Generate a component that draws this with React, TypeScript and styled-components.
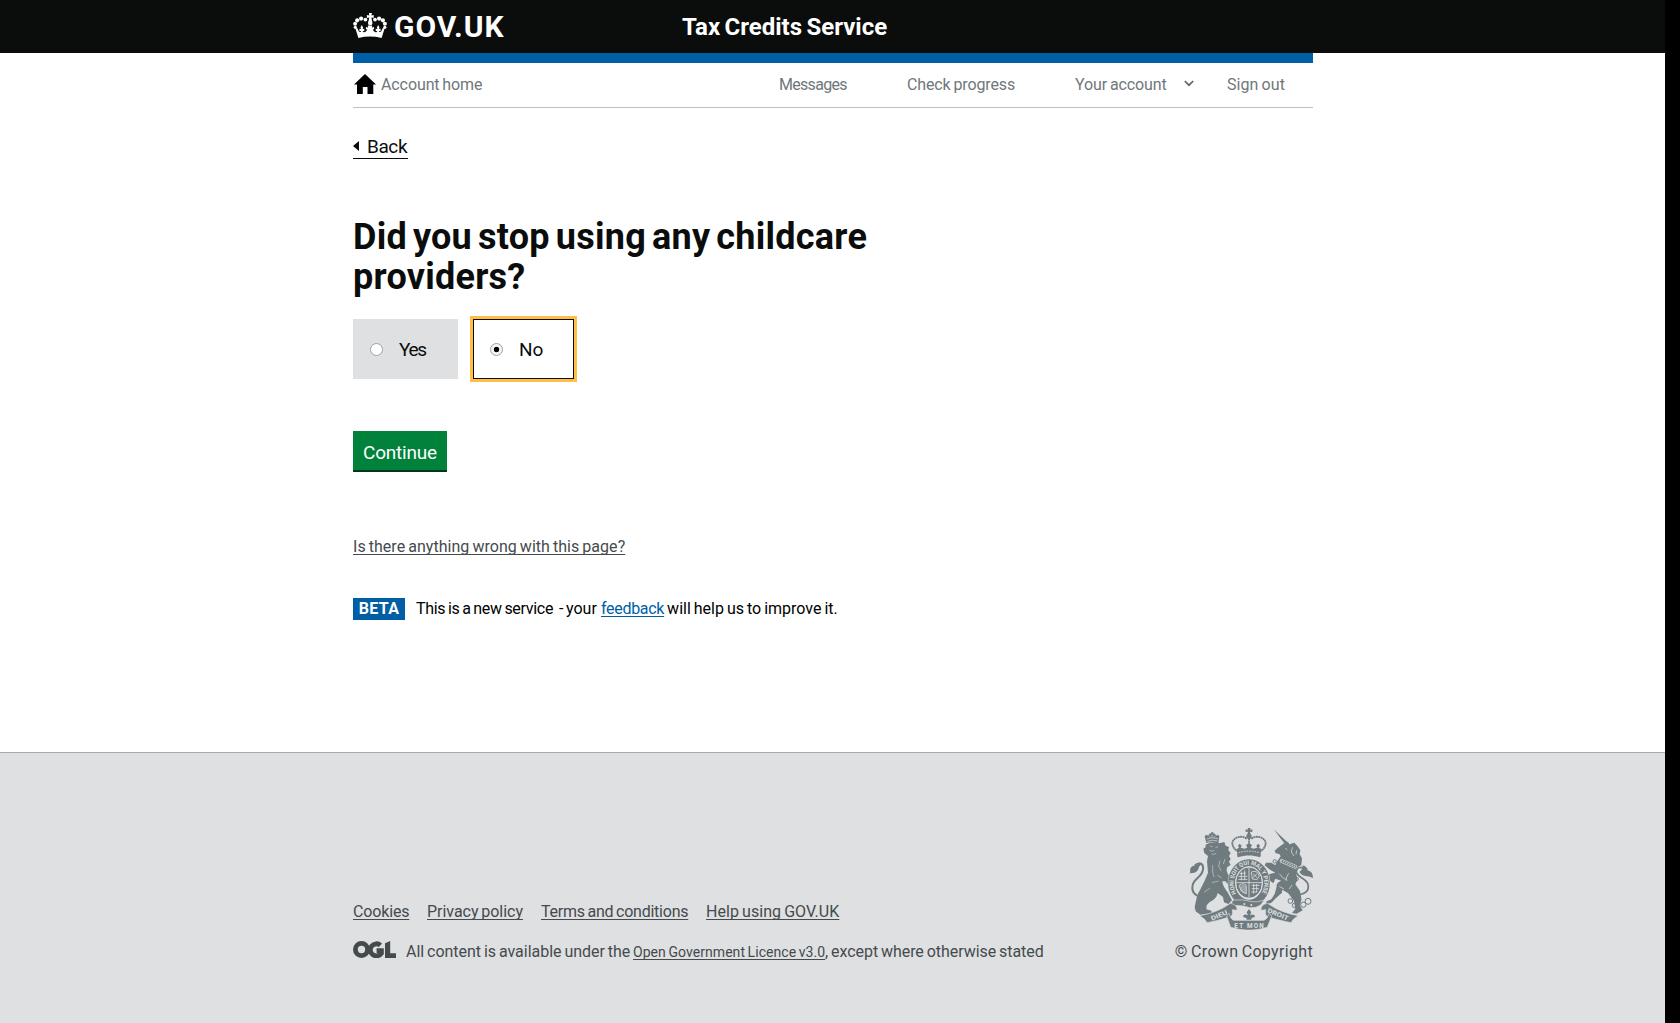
import React, { useState } from "react";
import styled, { createGlobalStyle } from "styled-components";

const GlobalStyle = createGlobalStyle`
  * { box-sizing: border-box; }
  html, body { margin: 0; padding: 0; background: #000; }
  body { font-family: Roboto, "Liberation Sans", sans-serif; color: #0b0c0c; overflow: hidden; }
`;

const Page = styled.div`
  width: 1665px;
  height: 1023px;
  display: flex;
  flex-direction: column;
  background: #fff;
`;

const Container = styled.div`
  width: 960px;
  margin: 0 auto 0 353px;
`;

const Header = styled.header`
  height: 53px;
  background: #0b0c0c;
  color: #fff;
`;

const HeaderInner = styled(Container)`
  height: 53px;
  display: flex;
  align-items: center;
`;

const Brand = styled.a`
  width: 329px;
  display: flex;
  align-items: center;
  gap: 7px;
  color: #fff;
  svg { display: block; margin-top: -2px; }
`;

const BrandName = styled.span`
  font-size: 30px;
  line-height: 32px;
  font-weight: 700;
  padding-top: 1px;
  letter-spacing: 0.95px;
`;

const ServiceName = styled.span`
  font-size: 24px;
  line-height: 30px;
  font-weight: 700;
  letter-spacing: 0px;
  word-spacing: -1.6px;
`;

const Nav = styled.nav`
  height: 55px;
  display: flex;
  align-items: center;
  border-top: 10px solid #005ea5;
  border-bottom: 1px solid #bfc1c3;
  color: #6f777b;
`;

const HomeLink = styled.a`
  width: 426px;
  display: flex;
  align-items: center;
  gap: 5px;
  svg { display: block; margin-top: -2px; }
`;

const Label = styled.span<{ $ls?: number }>`
  font-size: 16px;
  line-height: 20px;
  letter-spacing: ${(p) => p.$ls ?? 0}px;
  word-spacing: -1px;
  white-space: nowrap;
`;

const NavItem = styled.a<{ $w: number }>`
  width: ${(p) => p.$w}px;
  display: flex;
  align-items: center;
  gap: 17px;
  svg { display: block; margin-top: -3px; }
`;

const Main = styled.main`
  height: 644px;
  display: flex;
  flex-direction: column;
  align-items: flex-start;
`;

const BackLink = styled.a`
  display: flex;
  align-items: center;
  width: 55px;
  height: 25px;
  margin-top: 26px;
  gap: 8px;
  border-bottom: 1px solid #0b0c0c;
  font-size: 19px;
  letter-spacing: -0.4px;
  svg { display: block; margin-top: -1px; }
`;

const Heading = styled.h1`
  width: 600px;
  margin: 58px 0 22px;
  font-size: 36px;
  line-height: 40px;
  font-weight: 700;
  letter-spacing: 0.25px;
  word-spacing: -3.2px;
`;

const Choices = styled.div`
  display: flex;
  gap: 15px;
`;

const Choice = styled.label<{ $on: boolean }>`
  width: ${(p) => (p.$on ? 101 : 105)}px;
  height: 60px;
  display: flex;
  align-items: center;
  gap: 16px;
  padding-left: ${(p) => (p.$on ? 16 : 17)}px;
  background: ${(p) => (p.$on ? "#fff" : "#dee0e2")};
  border: ${(p) => (p.$on ? "1px solid #0b0c0c" : "0")};
  outline: ${(p) => (p.$on ? "3px solid #ffbf47" : "0")};
  font-size: 19px;
  line-height: 24px;
  letter-spacing: ${(p) => (p.$on ? 0 : -1.3)}px;
`;

const Radio = styled.input`
  appearance: none;
  width: 13px;
  height: 13px;
  margin: 0;
  border: 1px solid #a0a0a0;
  border-radius: 50%;
  background: #fff;
  &:checked { background: radial-gradient(circle, #000 2.4px, #f4f4f4 3.1px); }
`;

const ChoiceText = styled.span`
  padding-top: 1px;
`;

const Continue = styled.button`
  width: 94px;
  height: 39px;
  margin: 52px 0 0;
  padding: 4px 0 0;
  border: 0;
  background: #00823b;
  box-shadow: 0 2px 0 #003618;
  color: #fff;
  font-family: inherit;
  font-size: 19px;
  line-height: 24px;
  letter-spacing: -0.2px;
`;

const Link = styled.a<{ $c?: string; $ls?: number; $small?: boolean }>`
  color: ${(p) => p.$c ?? "#454a4d"};
  font-size: ${(p) => (p.$small ? 14 : 16)}px;
  line-height: 20px;
  letter-spacing: ${(p) => p.$ls ?? 0}px;
  word-spacing: -1px;
  text-decoration: underline 1px;
  text-underline-offset: 2px;
  text-decoration-skip-ink: none;
  white-space: nowrap;
`;

const Report = styled.div`
  display: flex;
  margin-top: 67px;
`;

const Phase = styled.div`
  display: flex;
  align-items: center;
  height: 22px;
  margin-top: 41px;
  color: #000;
`;

const Beta = styled.strong`
  width: 52px;
  height: 22px;
  margin-right: 11px;
  background: #005ea5;
  color: #fff;
  font-size: 16px;
  line-height: 21px;
  text-align: center;
  letter-spacing: 0.3px;
`;

const PhaseText = styled.span`
  display: flex;
  align-items: baseline;
`;

const Piece = styled(Label)<{ $w?: number }>`
  width: ${(p) => (p.$w ? p.$w + "px" : "auto")};
`;

const Footer = styled.footer`
  flex: 1;
  border-top: 1px solid #a1acb2;
  background: #dee0e2;
  color: #454a4d;
  padding-top: 75px;
`;

const FooterInner = styled(Container)`
  display: flex;
  justify-content: space-between;
`;

const FooterMeta = styled.div`
  padding-top: 74px;
`;

const FooterLinks = styled.div`
  display: flex;
  height: 20px;
`;

const FooterSlot = styled.span<{ $w: number }>`
  display: flex;
  width: ${(p) => p.$w}px;
`;

const Licence = styled.div`
  display: flex;
  align-items: baseline;
  height: 20px;
  margin-top: 18px;
  svg { display: block; width: 43px; height: 17px; margin-right: 10px; position: relative; top: 1px; }
`;

const Copyright = styled.a`
  display: flex;
  flex-direction: column;
  align-items: flex-end;
  gap: 12px;
  svg { display: block; }
`;

const Crown = () => (
  <svg width="34" height="26" viewBox="0 0 34 26" fill="#fff" aria-hidden="true">
    <path d="M16 0h3l-.6 2.5 2.3-.5v3l-2.3-.4.8 4.4h-3.8l.8-4.4-2.3.4v-3l2.3.5z" />
    <circle cx="17.2" cy="10" r="2.3" />
    <circle cx="12.4" cy="6.6" r="1.9" />
    <circle cx="8.1" cy="5.6" r="2.1" />
    <circle cx="4.2" cy="7.3" r="2.1" />
    <circle cx="2.1" cy="10.7" r="2" />
    <circle cx="2.3" cy="14.3" r="1.6" />
    <circle cx="22" cy="6.6" r="1.9" />
    <circle cx="26.1" cy="5.6" r="2.1" />
    <circle cx="29.9" cy="7.3" r="2.1" />
    <circle cx="31.9" cy="10.7" r="2" />
    <circle cx="31.8" cy="14.3" r="1.6" />
    <path d="M2.4 15.5l1.8-.4 1.7 3.4c1 .8 2 .6 2.3-.4l-1.8-.1v-2.2l1.6.2-.5-1.5 1.3-2.5 1.3 2.5-.5 1.5 1.7-.2v2.2l-1.6-.1c.4 1.7 2.2 1.7 3.1.6l1.5-1.7-1.5-.8.5-2.2 1.8 1-.3-2.4h4.4l-.3 2.4 1.8-1 .5 2.2-1.5.8 1.5 1.7c.9 1.1 2.7 1.1 3.1-.6l-1.6.1v-2.2l1.7.2-.5-1.5 1.3-2.5 1.3 2.5-.5 1.5 1.6-.2v2.2l-1.8.1c.3 1 1.3 1.2 2.3.4l1.7-3.4 1.8.4-3 9.5Q17 22.2 5.4 25z" />
  </svg>
);

const House = () => (
  <svg width="23" height="20" viewBox="0 0 23 20" aria-hidden="true">
    <path d="M12 0L23 10.4h-2.7V20h-5.8v-7H9.8v7H4v-9.6H1z" fill="#000" />
  </svg>
);

const Chevron = () => (
  <svg width="10" height="7" viewBox="0 0 10 7" aria-hidden="true">
    <path d="M.8 1L5 5.2 9.2 1" fill="none" stroke="#5f676b" strokeWidth="1.7" />
  </svg>
);

const Ogl = () => (
  <svg viewBox="0 0 43 17" aria-hidden="true">
    <g fill="none" stroke="#454a4d" strokeWidth="4.8">
      <circle cx="8.5" cy="8.5" r="6.1" />
      <path d="M27.5 4.3A6.1 6.1 0 1 0 28.4 12.4V9.6H23.6" />
    </g>
    <path d="M32 2.2L37.2 0v12.3H43V17H32z" fill="#454a4d" />
  </svg>
);

/* Royal coat of arms: lion, garter and shield, unicorn, crown and scroll. */
const Crest = () => (
  <svg width="125" height="102" viewBox="84 39 375 306" fill="#6f7b7f" aria-hidden="true">
    {/* imperial crown */}
    <path d="M263 39h9l-2 5 7-1v8l-7-1 2 9h-10l2-9-7 1v-8l7 1z" />
    <circle cx="267" cy="64" r="8" />
    <g fill="none" stroke="#6f7b7f" strokeWidth="5.5" strokeDasharray="6 1.2">
      <path d="M260 71C244 59 219 67 217 84c0 10 6 18 14 24M274 71c16-12 41-4 43 13 0 10-6 18-14 24" />
      <path d="M267 70v28" />
    </g>
    <path d="M229 103l8-5-3-6 5-6 6 6-3 6 12 3 8-3-4-8 9-5 9 5-4 8 8 3 12-3-3-6 6-6 5 6-3 6 8 5-3 12c1 5 0 9-2 12-24-7-42-7-66 0-3-3-3-8-2-12z" />
    <path d="M236 113q31-9 62 0" fill="none" stroke="#dee0e2" strokeWidth="2.5" strokeDasharray="5 3" />
    {/* lion */}
    <path d="M139 84l-5-20 5-5 6 3 3-6 5-1v-3h7v3l5 1 3 6 6-3 4 5-3 22q-18-7-36-2z" />
    <path d="M140 72q16-7 34-1M142 79q15-6 31-1M149 64l2 4M156 59v8M164 64l-1 4" fill="none" stroke="#dee0e2" strokeWidth="2" />
    <path d="M137 89C150 82 165 81 178 85L193 81l4 11 10 4-2 10 7 8-5 9 5 9-5 8 5 10-9 5c-6 8-2 18 4 27l14 18-2 14-12-2-11-13-9 0c1 14 10 24 17 35l12 22-11 11-13-5-3-16-16-12c-3 14-12 22-24 27l-9 10-1 12 15 4 2 8-35 4-14-10-3-12 5-24c2-10 4-18 10-26l16-32 9-22-3-34 3-16-11-9-3-13 7-4z" />
    <path d="M149 93l9 2M166 98l8-3M148 106q8 5 15 0M155 117q8 4 14-3M158 150q-2 24 4 36M180 137l-4 17 8 14M195 132l-5 15M172 180l13 9M156 203l20-5M132 232l18-13" fill="none" stroke="#dee0e2" strokeWidth="1.6" />
    <path d="M112 242C92 232 93 208 109 193c14-12 24-24 20-39-4-13-18-10-25-2" fill="none" stroke="#6f7b7f" strokeWidth="6" />
    <path d="M84 181q9-7 6-15 1-15 16-14 12-10 21-5-10 4-12 15-6 13-20 12-7 0-11 7z" />
    {/* unicorn */}
    <path d="M341 43l43 40-7 7z" />
    <path d="M370 86l14-6 4 8 15-5 10 11 8 12-2 12 7 12-2 20-14 8-2 12 4 25-6 13 14 20 4 22-4 22 8 14-18 10-14-2 10-12-4-24-18-24-18-10 0 9-18 16-14 14-18 6 4-10 14-6 10-16 6-22c-2-8 4-14 14-18l-18-6-6 14-10-8-6-16 8-5 14-3-18-10-14-12 4-8 16 0 12 8 4-10 12-17-4-7-11-2-3-8 9-8z" />
    <path d="M363 132l47 20-3 9-47-20zM376 100l6 4M397 97l-3 14 8 12M410 106l-2 12M358 176q8 14 24 20M386 175q-8 10-8 22M358 214l14 8M396 210l-8 12" fill="none" stroke="#dee0e2" strokeWidth="2.2" />
    <path d="M363 137l44 19" fill="none" stroke="#dee0e2" strokeWidth="4" strokeDasharray="3 4" />
    <path d="M412 240Q450 236 444 208c-4-18-37-22-35-40 2-13 18-14 27-4" fill="none" stroke="#6f7b7f" strokeWidth="5" />
    <path d="M428 151q14 4 15 15 16 4 16 23-12-6-23-6-12-2-18-12 10-6 10-20z" />
    <g fill="none" stroke="#6f7b7f" strokeWidth="3">
      <circle cx="344" cy="139" r="5" /><circle cx="343" cy="182" r="5" /><circle cx="410" cy="192" r="5" />
      <circle cx="391" cy="258" r="7" /><circle cx="404" cy="271" r="7" /><circle cx="417" cy="255" r="6" />
      <circle cx="430" cy="269" r="8" /><circle cx="444" cy="259" r="9" />
    </g>
    {/* garter */}
    <ellipse cx="267" cy="204" rx="64" ry="73" fill="#dee0e2" />
    <ellipse cx="267" cy="204" rx="52" ry="61" fill="none" stroke="#6f7b7f" strokeWidth="21" />
    <path id="garter" d="M229 235A46 55 0 1 1 305 235" fill="none" />
    <text fontFamily="Roboto, sans-serif" fontSize="18" fontWeight="700" fill="#dee0e2">
      <textPath href="#garter" textLength="222" lengthAdjust="spacingAndGlyphs">HONI SOIT QUI MAL Y PENSE</textPath>
    </text>
    <path d="M220 255q-12 14-1 17 31-2 49 6 20 2 34-8l11-15q-21 8-37 5-28-8-56-5z" stroke="#dee0e2" strokeWidth="2" />
    <circle cx="253" cy="267" r="3" fill="#dee0e2" />
    <circle cx="274" cy="270" r="3" fill="#dee0e2" />
    {/* quartered shield */}
    <ellipse cx="267" cy="203" rx="39" ry="46" />
    <g fill="none" stroke="#dee0e2" strokeWidth="2.5">
      <ellipse cx="267" cy="203" rx="40" ry="47" />
      <path d="M267 158v90M228 203h78M239 176l19-2M235 184h27M235 193h27M244 170v26M254 166v30M274 171q17-7 24 12l-7 11-14-2zM279 176l13 12M278 189l13-13M275 211h24M275 221h22M274 231h18M281 207v29M290 207v24" />
      <path d="M237 211q15-9 22 0v25q-15-2-22-25zM243 212v17M249 210v23M255 211v24" />
    </g>
    {/* scroll */}
    <g stroke="#dee0e2" strokeWidth="2">
      <path d="M119 302q54-9 92-37 21 3 20 21l-14-2q3 19-8 22-40 12-68 17l-7-10z" />
      <path d="M415 302q-54-9-92-37-21 3-20 21l14-2q-3 19 8 22 40 12 68 17l7-10z" />
      <path d="M207 295q6 20 15 21h90q10-3 16-21l7 8-13 34q-55 17-110 0l-12-34z" />
    </g>
    <path d="M267 282l7 10-4 9q11-6 15 2-2 7-10 5l-1 6h-14l-1-6q-8 2-10-5 4-8 15-2l-4-9z" />
    <g fontFamily="Roboto, sans-serif" fontSize="19" fontWeight="700" fill="#dee0e2">
      <text x="223" y="338" textLength="88">ET MON</text>
      <text transform="translate(156 317) rotate(-23)" textLength="52" lengthAdjust="spacingAndGlyphs">DIEU</text>
      <text transform="translate(321 291) rotate(23)" textLength="66" lengthAdjust="spacingAndGlyphs">DROIT</text>
    </g>
  </svg>
);

export default function App() {
  const [choice, setChoice] = useState("No");
  return (
    <>
      <GlobalStyle />
      <Page>
        <Header>
          <HeaderInner>
            <Brand>
              <Crown />
              <BrandName>GOV.UK</BrandName>
            </Brand>
            <ServiceName>Tax Credits Service</ServiceName>
          </HeaderInner>
        </Header>
        <Container>
          <Nav>
            <HomeLink>
              <House />
              <Label $ls={-0.1}>Account home</Label>
            </HomeLink>
            <NavItem $w={128}><Label $ls={-0.7}>Messages</Label></NavItem>
            <NavItem $w={168}><Label $ls={-0.12}>Check progress</Label></NavItem>
            <NavItem $w={152}><Label $ls={-0.1}>Your account</Label><Chevron /></NavItem>
            <NavItem $w={60}><Label $ls={0.08}>Sign out</Label></NavItem>
          </Nav>
          <Main>
            <BackLink>
              <svg width="6" height="10" viewBox="0 0 6 10"><path d="M6 0v10L0 5z" fill="#0b0c0c" /></svg>
              Back
            </BackLink>
            <Heading>Did you stop using any childcare<br />providers?</Heading>
            <Choices>
              {["Yes", "No"].map((value) => (
                <Choice key={value} $on={choice === value}>
                  <Radio type="radio" name="stopped" checked={choice === value} onChange={() => setChoice(value)} />
                  <ChoiceText>{value}</ChoiceText>
                </Choice>
              ))}
            </Choices>
            <Continue type="button">Continue</Continue>
            <Report><Link $ls={0.04}>Is there anything wrong with this page?</Link></Report>
            <Phase>
              <Beta>BETA</Beta>
              <PhaseText>
                <Piece $w={143} $ls={-0.3}>This is a new service</Piece>
                <Piece $w={7}>-</Piece>
                <Piece $w={35}>your</Piece>
                <Link $c="#005ea5" $ls={-0.3}>feedback</Link>
                <Piece>&nbsp;will help us to improve it.</Piece>
              </PhaseText>
            </Phase>
          </Main>
        </Container>
        <Footer>
          <FooterInner>
            <FooterMeta>
              <FooterLinks>
                <FooterSlot $w={74}><Link $ls={-0.15}>Cookies</Link></FooterSlot>
                <FooterSlot $w={114}><Link $ls={-0.04}>Privacy policy</Link></FooterSlot>
                <FooterSlot $w={165}><Link $ls={-0.24}>Terms and conditions</Link></FooterSlot>
                <FooterSlot $w={134}><Link $ls={0.06}>Help using GOV.UK</Link></FooterSlot>
              </FooterLinks>
              <Licence>
                <Ogl />
                <Piece $w={227} $ls={-0.03}>All content is available under the</Piece>
                <FooterSlot $w={192}><Link $small $ls={0.06}>Open Government Licence v3.0</Link></FooterSlot>
                <Piece $ls={-0.05}>, except where otherwise stated</Piece>
              </Licence>
            </FooterMeta>
            <Copyright>
              <Crest />
              <Label $ls={0.33}>© Crown Copyright</Label>
            </Copyright>
          </FooterInner>
        </Footer>
      </Page>
    </>
  );
}
